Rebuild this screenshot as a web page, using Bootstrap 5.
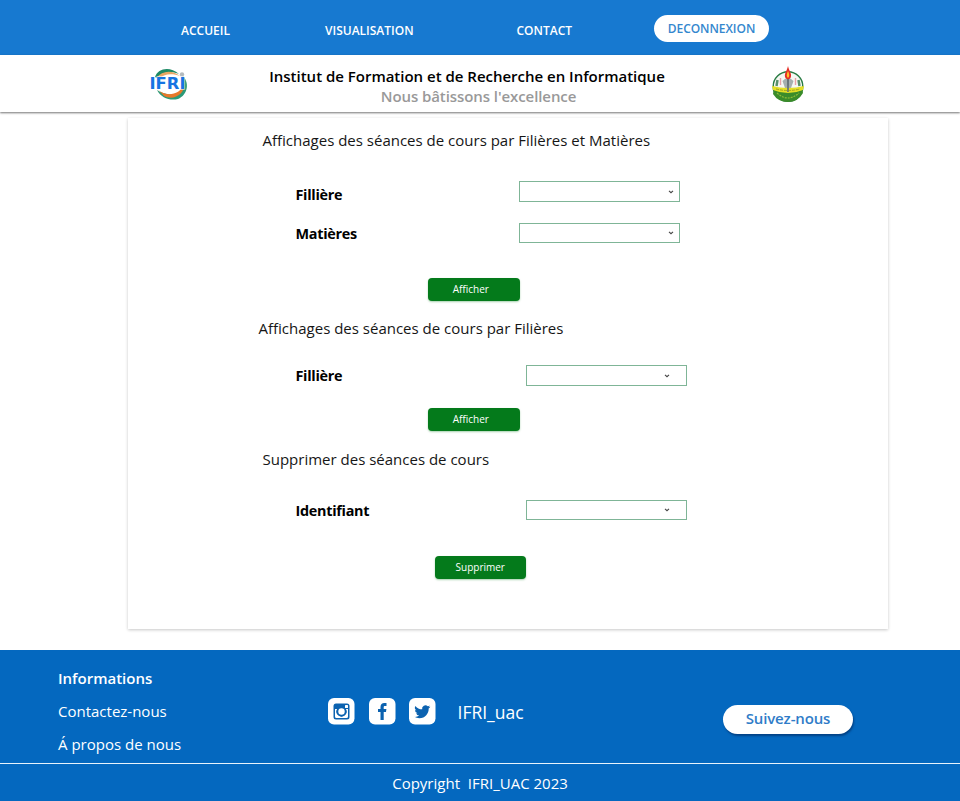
<!DOCTYPE html>
<html lang="fr">
<head>
<meta charset="utf-8">
<meta name="viewport" content="width=device-width, initial-scale=1">
<title>IFRI - Séances de cours</title>
<link href="https://cdn.jsdelivr.net/npm/bootstrap@5.3.0/dist/css/bootstrap.min.css" rel="stylesheet">
<style>
body{font-family:"Open Sans","Noto Sans",sans-serif;font-size:15px;line-height:20px;color:#000;background:#fff;width:960px;overflow-x:hidden}
.topbar{height:55px;background:#1779d0;padding:0 0 0 181px}
.topbar a{color:#fff;font-size:12px;font-weight:600;text-decoration:none;white-space:nowrap;padding-top:6px}
.n1{width:144px}.n2{width:191.5px}.n3{width:137.5px}
.btn-out{width:115px;height:27px;border-radius:14px;background:#fff;color:#3487ce;font-size:12px;font-weight:600;padding:0;line-height:28px;border:0;letter-spacing:-.05px;margin-top:2px}
.brandbar{height:57px;background:#fff;box-shadow:0 1px 2px rgba(0,0,0,.55);padding:0 154px 0 148px;position:relative;z-index:1}
.inst{font-weight:600;font-size:15px;letter-spacing:-.01px}
.motto{font-weight:600;color:#999;font-size:15px;letter-spacing:-.08px;padding-left:23px}
.brandbar .titles{padding-top:11px;width:396px;margin-left:79px;margin-right:auto;white-space:nowrap}
.panel{width:760px;height:511px;margin-left:128px;margin-top:6px;margin-bottom:21px;box-shadow:0 1px 3px rgba(0,0,0,.22);background:#fff;padding-top:12px}
.sec-title{font-size:15px;font-weight:400;line-height:20px;margin:0;padding-left:134.5px;white-space:nowrap;color:#161616}
.field{padding-left:167.5px;height:21px}
.field label{font-weight:700;font-size:14.4px;width:223.5px;white-space:nowrap;letter-spacing:-.28px}
.shifted label{width:230.5px}
.pick{width:161px;height:21px;border:1px solid #7fb597;background:#fff;padding-right:5px}
.shifted .pick{padding-right:16px}
.short{height:20px}
.btn-go{width:91.5px;height:23px;background:#047a1b;color:#fff;border:0;border-radius:4px;font-size:10px;line-height:21px;padding:0 6px 1px 0;margin-left:300px;box-shadow:0 1px 2px rgba(4,122,27,.35)}
.btn-go:hover{background:#047a1b;color:#fff}
.foot{background:#0468bf;color:#fff;height:151px}
.foot-top{height:114px;border-bottom:1px solid #e8f3fc;padding-left:58px}
.infos{width:270px;padding-top:18px}
.infos a{color:#fff;text-decoration:none;white-space:nowrap}
.social{padding-top:48px;gap:13.5px;width:395px}
.handle{font-size:17.5px;line-height:28px;margin-left:8px}
.btn-follow{width:130px;height:29px;border-radius:15px;background:#fff;color:#2f7cc8;border:0;font-size:15px;font-weight:600;letter-spacing:-.15px;line-height:26px;padding:0 0 2px;margin-top:54.500px;box-shadow:1px 2px 2px rgba(0,30,80,.5)}
.copy{height:37px;line-height:39px;white-space:pre}
</style>
</head>
<body>
<nav class="topbar d-flex align-items-center">
  <a class="n1" href="#">ACCUEIL</a>
  <a class="n2" href="#">VISUALISATION</a>
  <a class="n3" href="#">CONTACT</a>
  <button class="btn btn-out" type="button">DECONNEXION</button>
</nav>
<header class="brandbar d-flex">
  <svg class="mt-2" width="42" height="42" viewBox="0 0 42 42">
    <path d="M7 14C10 5 22 3 31 11C24 8 14 9 9 15Z" fill="#1d8a66"/>
    <path d="M8.500 15C14 7.500 24 6.500 32 13C24 10 15 11 11 16Z" fill="#e9a765"/>
    <path d="M34 12C42 19 40 32 30 36C22 38 13 35 9 27C18 33 33 34 35 24C36 19 36 16 34 12Z" fill="#2c9a78"/>
    <path d="M9.500 26C16 34 32 33 36 21C37 31 26 38 16 33Z" fill="#e8782a"/>
    <circle cx="34" cy="11.500" r="2.200" fill="#b4babd"/>
    <text x="1.500" y="25.800" font-family="DejaVu Sans" font-weight="700" font-size="16" textLength="36" lengthAdjust="spacingAndGlyphs" fill="#1674e2" stroke="#fff" stroke-width="1" paint-order="stroke">IFRI</text>
  </svg>
  <div class="titles text-center">
    <div class="inst">Institut de Formation et de Recherche en Informatique</div>
    <div class="motto">Nous bâtissons l'excellence</div>
  </div>
  <svg width="36" height="40" viewBox="0 0 36 40" style="margin-top:10px">
    <circle cx="18" cy="21.500" r="14.800" fill="#f5f8f3" stroke="#287b43" stroke-width="1.400"/>
    <path d="M4 24L3 29Q8 37 18 37Q28 37 33 28L32 24Z" fill="#3a8b2a"/>
    <path d="M7 28Q18 38 29 28" fill="none" stroke="#8fbd35" stroke-width="1.200" stroke-dasharray="2 1"/>
    <path d="M7.500 15L6.500 21M28.500 15L29.500 21" stroke="#58906a" stroke-width="2.500"/>
    <path d="M10.500 13V20M25.500 13V20" stroke="#e9a0a7" stroke-width="1.400"/>
    <path d="M12.500 16Q18 10 23.500 16L21 23H15Z" fill="#a5afaf"/>
    <path d="M2 21Q10 23 18 23Q26 23 34 21L33 25Q26 28 18 28Q10 28 3 25Z" fill="#e4df27"/>
    <path d="M17 14H19L18.800 27H17.200Z" fill="#66747a"/>
    <path d="M6 24Q18 27 30 24" fill="none" stroke="#90941f" stroke-width=".8" stroke-dasharray="3 1"/>
    <path d="M18 1C19 6 22.500 9 20.500 13Q18 15.500 15.500 13C13.500 9 17 6 18 1Z" fill="#e42e25"/>
    <path d="M18 6Q20.500 11 18 13Q15.500 11 18 6Z" fill="#ffc329"/>
  </svg>
</header>
<main class="pt-0 d-flow-root overflow-hidden pb-0">
<div class="panel">
  <h2 class="sec-title">Affichages des séances de cours par Filières et Matières</h2>
  <div class="field d-flex" style="margin-top:31px">
    <label style="margin-top:4px">Fillière</label>
    <div class="pick d-flex align-items-center justify-content-end"><svg width="6" height="4" viewBox="0 0 6 4"><path d="M1 .8L3 2.7L5 .8" fill="none" stroke="#444" stroke-width="1.1"/></svg></div>
  </div>
  <div class="field d-flex" style="margin-top:21px">
    <label style="margin-top:1px">Matières</label>
    <div class="pick short d-flex align-items-center justify-content-end"><svg width="6" height="4" viewBox="0 0 6 4"><path d="M1 .8L3 2.7L5 .8" fill="none" stroke="#444" stroke-width="1.1"/></svg></div>
  </div>
  <button class="btn btn-go d-block" type="button" style="margin-top:34px">Afficher</button>
  <h2 class="sec-title" style="margin-top:17px;padding-left:130.500px">Affichages des séances de cours par Filières</h2>
  <div class="field shifted d-flex" style="margin-top:27px">
    <label style="margin-top:1px">Fillière</label>
    <div class="pick d-flex align-items-center justify-content-end"><svg width="6" height="4" viewBox="0 0 6 4"><path d="M1 .8L3 2.7L5 .8" fill="none" stroke="#444" stroke-width="1.1"/></svg></div>
  </div>
  <button class="btn btn-go d-block" type="button" style="margin-top:22px">Afficher</button>
  <h2 class="sec-title" style="margin-top:18px">Supprimer des séances de cours</h2>
  <div class="field shifted d-flex" style="margin-top:31px">
    <label style="margin-top:1px">Identifiant</label>
    <div class="pick short d-flex align-items-center justify-content-end"><svg width="6" height="4" viewBox="0 0 6 4"><path d="M1 .8L3 2.7L5 .8" fill="none" stroke="#444" stroke-width="1.1"/></svg></div>
  </div>
  <button class="btn btn-go d-block px-0" type="button" style="margin-top:35px;margin-left:306.500px">Supprimer</button>
</div>
</main>
<footer class="foot">
  <div class="foot-top d-flex">
    <div class="infos d-flex flex-column" style="gap:13px">
      <span class="fw-semibold">Informations</span>
      <a href="#">Contactez-nous</a>
      <a href="#">Á propos de nous</a>
    </div>
    <div class="social d-flex align-items-start">
      <svg width="27" height="27" viewBox="0 0 27 27"><rect width="26.5" height="26.5" rx="6" fill="#fff"/><rect x="5.5" y="5.5" width="16" height="16" rx="2.5" fill="#0b62b0"/><path d="M7 11H9.2A5 5 0 1 0 17.8 11H20V18.5Q20 20 18.5 20H8.500Q7 20 7 18.500Z" fill="#fff"/><circle cx="13.500" cy="13.500" r="5" fill="#0b62b0"/><circle cx="13.500" cy="13.500" r="3.200" fill="#fff"/><rect x="17" y="7" width="3" height="3" rx=".6" fill="#fff"/></svg>
      <svg width="27" height="27" viewBox="0 0 27 27"><rect width="26.500" height="26.500" rx="6" fill="#fff"/><path d="M11.500 22V14H9V10.900H11.500V9C11.500 6.300 13 5 15.300 5H17.500V8H16C15 8 14.700 8.500 14.700 9.300V10.900H17.400L17 14H14.700V22Z" fill="#0b62b0"/></svg>
      <svg width="27" height="27" viewBox="0 0 27 27"><rect width="26.500" height="26.500" rx="6" fill="#fff"/><path transform="translate(5.300 5.300)" d="M5.026 15c6.038 0 9.341-5.003 9.341-9.334 0-.14 0-.282-.006-.422A6.685 6.685 0 0 0 16 3.542a6.658 6.658 0 0 1-1.889.518 3.301 3.301 0 0 0 1.447-1.817 6.533 6.533 0 0 1-2.087.793A3.286 3.286 0 0 0 7.875 6.030a9.325 9.325 0 0 1-6.767-3.429 3.289 3.289 0 0 0 1.018 4.382A3.323 3.323 0 0 1 .640 6.575v.045a3.288 3.288 0 0 0 2.632 3.218 3.203 3.203 0 0 1-.865.115 3.230 3.230 0 0 1-.614-.057 3.283 3.283 0 0 0 3.067 2.277A6.588 6.588 0 0 1 .780 13.580a6.320 6.320 0 0 1-.780-.045A9.344 9.344 0 0 0 5.026 15z" fill="#0b62b0"/></svg>
      <span class="handle">IFRI_uac</span>
    </div>
    <button class="btn btn-follow" type="button">Suivez-nous</button>
  </div>
  <div class="copy text-center">Copyright  IFRI_UAC 2023</div>
</footer>
<script src="https://cdn.jsdelivr.net/npm/bootstrap@5.3.0/dist/js/bootstrap.bundle.min.js"></script>
</body>
</html>
